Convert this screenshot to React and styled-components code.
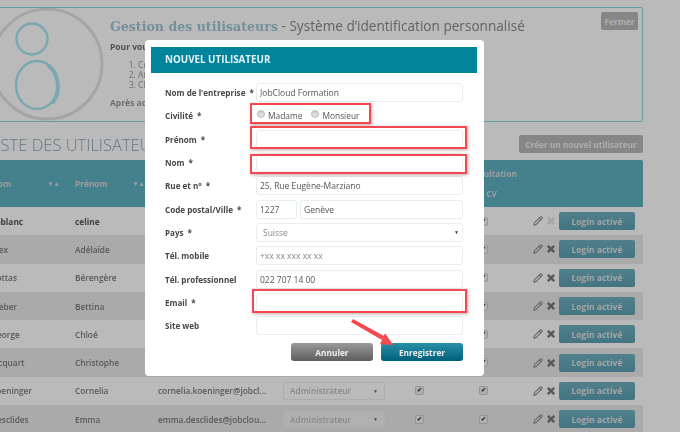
import React from "react";
import styled, { createGlobalStyle } from "styled-components";
import { FaTimes } from "react-icons/fa";
import { Pencil } from "lucide-react";

const GlobalStyle = createGlobalStyle`
  html, body {
    margin: 0;
    padding: 0;
    height: 432px;
    overflow: hidden;
    background: #fff;
    font-family: "Open Sans", "Liberation Sans", sans-serif;
    color: #555;
  }
`;

const Page = styled.div`
  width: 680px;
  height: 432px;
  overflow: hidden;
  padding-top: 7px;
  box-sizing: border-box;
  filter: blur(0.35px);
`;

const Content = styled.div`
  width: 673px;
  margin-left: -30px;
`;

const InfoPanel = styled.section`
  height: 115px;
  box-sizing: border-box;
  border: 1px solid #8ad8e6;
  border-radius: 2px;
  display: flex;
  position: relative;
  overflow: hidden;
`;

const Logo = styled.svg`
  width: 139px;
  height: 113px;
  flex: none;
`;

const InfoBody = styled.div`
  padding: 7px 0 0 0;
  flex: 1;
`;

const InfoTitle = styled.h1`
  margin: 0 0 4px;
  font-size: 13.6px;
  line-height: 21px;
  font-weight: 400;
  color: #888;
  white-space: nowrap;
`;

const SlabTitle = styled.span`
  font-family: "DejaVu Serif", serif;
  font-weight: 700;
  font-size: 12.6px;
  color: #a0c6d6;
`;

const InfoLead = styled.p`
  margin: 0 0 7px;
  font-size: 8.5px;
  line-height: 12px;
  font-weight: 700;
  color: #6e6e6e;
  white-space: nowrap;
`;

const Steps = styled.ol`
  margin: 0 0 7px;
  padding-left: 28px;
  font-size: 8.5px;
  line-height: 10px;
  color: #999;
`;

const InfoNote = styled.p`
  margin: 0;
  font-size: 8.5px;
  line-height: 12px;
  font-weight: 700;
  color: #999;
`;

const GreyButton = styled.button`
  border: 0;
  border-radius: 2px;
  background: #b8b8b8;
  color: #eee;
  font-family: inherit;
  font-weight: 700;
  font-size: 8.3px;
  padding: 0;
  height: 18px;
  white-space: nowrap;
`;

const CloseButton = styled(GreyButton)`
  position: absolute;
  top: 4px;
  right: 4px;
  width: 37px;
`;

const ListBar = styled.div`
  height: 38px;
  box-sizing: border-box;
  display: flex;
  align-items: center;
  justify-content: space-between;
  padding: 6px 0 0 18px;
`;

const ListTitle = styled.h2`
  margin: 0;
  font-size: 16.5px;
  font-weight: 300;
  color: #8aa6b2;
  white-space: nowrap;
`;

const CreateButton = styled(GreyButton)`
  width: 124px;
`;

const columns = "84px 83px 125px 117px 38px 90px 1fr";

const TableHead = styled.div`
  display: grid;
  grid-template-columns: ${columns};
  height: 47px;
  padding-left: 21px;
  background: #5fb0c2;
  border-radius: 2px 2px 0 0;
  color: #d8d8d8;
  font-size: 8.3px;
  font-weight: 700;
  align-items: center;
`;

const HeadCell = styled.div`
  display: flex;
  align-items: center;
  justify-content: space-between;
  padding-right: ${(p) => p.$inset || 0}px;
  white-space: nowrap;
`;

const SortArrows = styled.span`
  font-size: 6.5px;
  color: #d8d8d8;
`;

const StackHead = styled.div`
  grid-column: 5 / 7;
  height: 100%;
  display: flex;
  flex-direction: column;
  justify-content: space-around;
  align-items: flex-end;
  padding: 4px 11px 4px 0;
  box-sizing: border-box;
`;

const CvLabel = styled.span`
  margin-right: 20px;
`;

const Row = styled.div`
  display: grid;
  grid-template-columns: ${columns};
  height: 28.3px;
  padding-left: 21px;
  align-items: center;
  font-size: 8.3px;
  font-weight: ${(p) => (p.$active ? 700 : 600)};
  color: ${(p) => (p.$active ? "#555" : "#7a7a7a")};
  background: ${(p) => (p.$dark ? "#eaeaea" : "#fff")};
  white-space: nowrap;
`;

const RoleSelect = styled.div`
  width: 102px;
  height: 18px;
  box-sizing: border-box;
  border: 1px solid #eee;
  border-radius: 2px;
  display: flex;
  justify-content: space-between;
  align-items: center;
  padding: 0 6px;
  background: ${(p) => (p.$dark ? "#f2f2f2" : "#fff")};
  color: #bbb;
  font-size: 8.3px;
  font-weight: 600;
`;

const Caret = styled.span`
  font-size: 5px;
  color: #666;
`;

const CheckCell = styled.div`
  display: flex;
  justify-content: center;
`;

const Tick = styled.span`
  width: 7px;
  height: 7px;
  border-radius: 2px;
  background: #f2f2f2;
  border: 1px solid #ccc;
  color: #333;
  font-size: 6px;
  line-height: 7px;
  text-align: center;
`;

const Actions = styled.div`
  display: flex;
  align-items: center;
  justify-content: flex-end;
  gap: 3px;
  padding-right: 8px;
`;

const ActionIcons = styled.div`
  display: flex;
  align-items: center;
  gap: 3px;
  color: #8c8c8c;
`;

const RemoveIcon = styled(FaTimes)`
  color: ${(p) => (p.$muted ? "#e0e0e0" : "#777")};
  stroke: currentColor;
  stroke-width: 50px;
`;

const LoginButton = styled.button`
  width: 76px;
  height: 18px;
  padding: 0;
  border: 0;
  border-radius: 2px;
  background: linear-gradient(#6fb0c0, #5ca0b2);
  color: #e2e2e2;
  font-family: inherit;
  font-weight: 700;
  font-size: 8.5px;
`;

const Overlay = styled.div`
  position: fixed;
  inset: 0;
  background: rgba(0, 0, 0, 0.27);
  padding: 40px 0 0 145px;
  box-sizing: border-box;
`;

const Modal = styled.div`
  position: relative;
  width: 339px;
  height: 336px;
  box-sizing: border-box;
  padding: 7px 7px 0 6px;
  background: #fff;
  border-radius: 4px;
  filter: blur(0.3px);
`;

const ModalHeader = styled.h3`
  margin: 0 0 8px;
  height: 26px;
  padding-left: 14px;
  background: #00849c;
  color: #e6f3f6;
  font-size: 9.8px;
  font-weight: 700;
  line-height: 26px;
  text-transform: uppercase;
`;

const Form = styled.form`
  display: grid;
  grid-auto-rows: 23.3px;
  padding-left: 14px;
`;

const FormRow = styled.div`
  display: grid;
  grid-template-columns: 91px 207px;
  align-items: center;
`;

const Label = styled.label`
  font-size: 8.1px;
  font-weight: 700;
  color: #484848;
  white-space: nowrap;
`;

const Star = styled.span`
  margin-left: 4px;
`;

const Input = styled.input`
  box-sizing: border-box;
  width: ${(p) => p.$width || "100%"};
  height: 19px;
  padding: 0 3px;
  border: 1px solid #e8eef2;
  border-radius: 3px;
  background: #fff;
  font-family: inherit;
  font-size: 8.5px;
  font-weight: 500;
  color: #555;
  outline: none;
  &::placeholder {
    color: #888;
  }
`;

const Split = styled.div`
  display: flex;
  gap: 3px;
`;

const FakeSelect = styled.div`
  box-sizing: border-box;
  height: 19px;
  border: 1px solid #e8eef2;
  border-radius: 3px;
  display: flex;
  align-items: center;
  justify-content: space-between;
  padding: 0 3px 0 6px;
  font-size: 8.5px;
  color: #888;
`;

const DarkCaret = styled.span`
  font-size: 5px;
  color: #333;
`;

const RadioGroup = styled.div`
  display: flex;
  align-items: center;
  font-size: 8.4px;
  color: #555;
  padding-left: 1px;
`;

const Radio = styled.input.attrs({ type: "radio", name: "civilite" })`
  appearance: none;
  width: 8px;
  height: 8px;
  margin: 0 3px 3px 0;
  border: 1px solid #bbb;
  border-radius: 50%;
  background: linear-gradient(#ccc, #e8e8e8);
`;

const RadioLabel = styled.label`
  margin-right: 9px;
`;

const FormActions = styled.div`
  display: flex;
  justify-content: flex-end;
  gap: 8px;
  margin: 6px 0 0;
  padding-right: 14px;
`;

const ModalButton = styled.button`
  width: 82px;
  height: 18px;
  padding: 0;
  border: 0;
  border-radius: 3px;
  font-family: inherit;
  font-weight: 700;
  font-size: 8.3px;
  color: #eee;
  background: ${(p) =>
    p.$primary ? "linear-gradient(#2a8fa9, #005f7a)" : "linear-gradient(#9a9a9a, #5e5e5e)"};
`;

const Highlight = styled.div`
  position: absolute;
  left: ${(p) => p.$left}px;
  top: ${(p) => p.$top}px;
  width: ${(p) => p.$width}px;
  height: ${(p) => p.$height}px;
  box-sizing: border-box;
  border: 2px solid #f4494f;
  box-shadow: 1px 1px 3px rgba(120, 60, 60, 0.45);
  pointer-events: none;
`;

const Arrow = styled.svg`
  position: absolute;
  left: 200px;
  top: 276px;
  width: 60px;
  height: 40px;
  overflow: visible;
`;

const users = [
  ["Leblanc", "celine"],
  ["Alex", "Adélaïde"],
  ["Bottas", "Bérengère"],
  ["Weber", "Bettina"],
  ["George", "Chloé"],
  ["Jacquart", "Christophe"],
  ["Koeninger", "Cornelia", "cornelia.koeninger@jobcl..."],
  ["Desclides", "Emma", "emma.desclides@jobclou..."],
];

const fields = [
  ["Prénom", ""],
  ["Nom", ""],
  ["Rue et n°", "25, Rue Eugène-Marziano"],
];

const App = () => {
  return (
    <>
      <GlobalStyle />
      <Page>
        <Content>
          <InfoPanel>
            <Logo viewBox="0 0 139 113">
              <circle cx="76" cy="56" r="55" fill="none" stroke="#e2e2e2" strokeWidth="3" />
              <circle cx="61" cy="31" r="15.5" fill="none" stroke="#a8e6f2" strokeWidth="2.4" />
              <ellipse cx="66" cy="77" rx="21" ry="24" fill="none" stroke="#a8e6f2" strokeWidth="2.4" />
              <path d="M78 58 C88 66 90 84 82 94" fill="none" stroke="#a8e6f2" strokeWidth="4" strokeLinecap="round" />
            </Logo>
            <InfoBody>
              <InfoTitle>
                <SlabTitle>Gestion des utilisateurs</SlabTitle> - Système d’identification personnalisé
              </InfoTitle>
              <InfoLead>Pour vous assurer que chaque membre de votre équipe a son propre login :</InfoLead>
              <Steps>
                <li>Créez un utilisateur</li>
                <li>Attribuez-lui un rôle</li>
                <li>Cliquez sur activer</li>
              </Steps>
              <InfoNote>Après activation, un email lui est envoyé</InfoNote>
            </InfoBody>
            <CloseButton>Fermer</CloseButton>
          </InfoPanel>
          <ListBar>
            <ListTitle>LISTE DES UTILISATEURS</ListTitle>
            <CreateButton>Créer un nouvel utilisateur</CreateButton>
          </ListBar>
          <TableHead>
            <HeadCell $inset={15}>
              Nom<SortArrows>▼▲</SortArrows>
            </HeadCell>
            <HeadCell $inset={13}>
              Prénom<SortArrows>▼▲</SortArrows>
            </HeadCell>
            <HeadCell />
            <HeadCell />
            <StackHead>
              <span>Consultation</span>
              <CvLabel>CV</CvLabel>
            </StackHead>
          </TableHead>
          {users.map(([last, first, mail], i) => (
            <Row key={last} $dark={i % 2 === 1} $active={i === 0}>
              <div>{last}</div>
              <div>{first}</div>
              <div>{mail}</div>
              <div>
                <RoleSelect $dark={i % 2 === 1}>
                  Administrateur<Caret>▼</Caret>
                </RoleSelect>
              </div>
              <CheckCell>
                <Tick>✔</Tick>
              </CheckCell>
              <CheckCell>
                <Tick>✔</Tick>
              </CheckCell>
              <Actions>
                <ActionIcons>
                  <Pencil size={10} strokeWidth={2.6} />
                  <RemoveIcon size={10} $muted={i === 0} />
                </ActionIcons>
                <LoginButton>Login activé</LoginButton>
              </Actions>
            </Row>
          ))}
        </Content>
      </Page>
      <Overlay>
        <Modal>
          <ModalHeader>Nouvel utilisateur</ModalHeader>
          <Form>
            <FormRow>
              <Label>Nom de l'entreprise<Star>*</Star></Label>
              <Input defaultValue="JobCloud Formation" />
            </FormRow>
            <FormRow>
              <Label>Civilité<Star>*</Star></Label>
              <RadioGroup>
                <Radio />
                <RadioLabel>Madame</RadioLabel>
                <Radio />
                <RadioLabel>Monsieur</RadioLabel>
              </RadioGroup>
            </FormRow>
            {fields.map(([label, value]) => (
              <FormRow key={label}>
                <Label>{label}<Star>*</Star></Label>
                <Input defaultValue={value} />
              </FormRow>
            ))}
            <FormRow>
              <Label>Code postal/Ville<Star>*</Star></Label>
              <Split>
                <Input $width="41px" defaultValue="1227" />
                <Input $width="163px" defaultValue="Genève" />
              </Split>
            </FormRow>
            <FormRow>
              <Label>Pays<Star>*</Star></Label>
              <FakeSelect>
                Suisse<DarkCaret>▼</DarkCaret>
              </FakeSelect>
            </FormRow>
            <FormRow>
              <Label>Tél. mobile</Label>
              <Input placeholder="+xx xx xxx xx xx" />
            </FormRow>
            <FormRow>
              <Label>Tél. professionnel</Label>
              <Input defaultValue="022 707 14 00" />
            </FormRow>
            <FormRow>
              <Label>Email<Star>*</Star></Label>
              <Input />
            </FormRow>
            <FormRow>
              <Label>Site web</Label>
              <Input />
            </FormRow>
          </Form>
          <FormActions>
            <ModalButton>Annuler</ModalButton>
            <ModalButton $primary>Enregistrer</ModalButton>
          </FormActions>
          <Highlight $left={105} $top={63} $width={121} $height={21} />
          <Highlight $left={105} $top={86} $width={217} $height={23} />
          <Highlight $left={105} $top={114} $width={217} $height={20} />
          <Highlight $left={107} $top={249} $width={215} $height={24} />
          <Arrow viewBox="0 0 60 40">
            <path d="M6 6 L8 3 L39 20 L37 24 Z" fill="#f4494f" />
            <path d="M48.3 29 L35 28.3 L40 17.3 Z" fill="#f4494f" />
          </Arrow>
        </Modal>
      </Overlay>
    </>
  );
};

export default App;
